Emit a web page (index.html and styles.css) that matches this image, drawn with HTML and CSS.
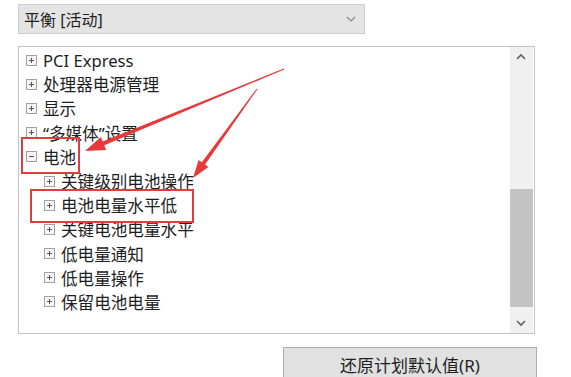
FILE: index.html
```html
<!DOCTYPE html>
<html lang="zh-CN">

<head>
  <meta charset="UTF-8">
  <title>电源选项</title>
  <link rel="stylesheet" href="styles.css">
</head>

<body>
  <div class="page">
    <div class="select">
      <span class="select-text">平衡 [活动]</span>
      <svg class="select-arrow" width="10" height="6" viewBox="0 0 10 6">
        <path d="M1 1 L5 5 L9 1" fill="none" stroke="#888" stroke-width="1.2" />
      </svg>
    </div>

    <div class="tree-box">
      <ul class="tree">
        <li class="row"><span class="toggle plus"></span>PCI Express</li>
        <li class="row"><span class="toggle plus"></span>处理器电源管理</li>
        <li class="row"><span class="toggle plus"></span>显示</li>
        <li class="row"><span class="toggle plus"></span>“多媒体”设置</li>
        <li class="row"><span class="mark mark-parent"><span class="toggle minus"></span>电池</span></li>
        <li class="row child"><span class="toggle plus"></span>关键级别电池操作</li>
        <li class="row child"><span class="mark mark-child"><span class="toggle plus"></span>电池电量水平低</span></li>
        <li class="row child"><span class="toggle plus"></span>关键电池电量水平</li>
        <li class="row child"><span class="toggle plus"></span>低电量通知</li>
        <li class="row child"><span class="toggle plus"></span>低电量操作</li>
        <li class="row child"><span class="toggle plus"></span>保留电池电量</li>
      </ul>
      <div class="scrollbar">
        <svg class="scroll-btn" width="22" height="20" viewBox="0 0 22 20">
          <path d="M7 12 L11 8 L15 12" fill="none" stroke="#606060" stroke-width="1.6" />
        </svg>
        <div class="track">
          <div class="thumb"></div>
        </div>
        <svg class="scroll-btn" width="22" height="20" viewBox="0 0 22 20">
          <path d="M7 8 L11 12 L15 8" fill="none" stroke="#606060" stroke-width="1.6" />
        </svg>
      </div>
    </div>

    <div class="actions">
      <button class="button">还原计划默认值(R)</button>
    </div>

    <svg class="arrows" width="571" height="377" viewBox="0 0 571 377">
      <polygon fill="#e8393a" points="283.8,68.5 102.7,141.6 100.8,136.9 85,151 106.2,149.9 104.3,145.2 284.2,69.5" />
      <polygon fill="#e8393a" points="256.6,88.7 201.9,162.2 198.6,159.9 193,178 208.4,166.9 205.1,164.6 257.4,89.3" />
    </svg>
  </div>
</body>

</html>
```

FILE: styles.css
```css
body {
  margin: 0;
  background: #ffffff;
  font-family: "Noto Sans", "Noto Sans CJK SC", sans-serif;
  color: #1e1e1e;
  overflow: hidden;
}

.page {
  position: relative;
  width: 571px;
  height: 377px;
  padding-top: 4px;
  box-sizing: border-box;
}

.select {
  display: flex;
  align-items: center;
  justify-content: space-between;
  margin-left: 18px;
  width: 347px;
  height: 30px;
  box-sizing: border-box;
  padding: 0 8px 0 5px;
  background: #e4e4e4;
  border: 1px solid #cdcdcd;
  font-size: 16px;
}

.tree-box {
  display: flex;
  margin-top: 12px;
  margin-left: 18px;
  width: 517px;
  height: 288px;
  box-sizing: border-box;
  border: 1px solid #c4c4c4;
  background: #fff;
}

.tree {
  flex: 1;
  list-style: none;
  margin: 0;
  padding: 1px 0 0 0;
}

.row {
  display: flex;
  align-items: center;
  height: 24.2px;
  padding-left: 7px;
  font-size: 16.6px;
  white-space: nowrap;
}

.row.child {
  padding-left: 25px;
}

.toggle {
  position: relative;
  display: inline-block;
  width: 9px;
  height: 9px;
  margin-right: 6px;
  border: 1px solid #a2a2a2;
  background: #f6f6f6;
  flex-shrink: 0;
}

.toggle::before {
  content: "";
  position: absolute;
  left: 2px;
  top: 4px;
  width: 5px;
  height: 1px;
  background: #555;
}

.plus::after {
  content: "";
  position: absolute;
  left: 4px;
  top: 2px;
  width: 1px;
  height: 5px;
  background: #555;
}

.mark {
  position: relative;
  display: flex;
  align-items: center;
}

.mark::after {
  content: "";
  position: absolute;
  border: 2px solid #e23c3c;
}

.mark-parent::after {
  left: -5px;
  right: -4px;
  top: -8px;
  bottom: -5px;
}

.mark-child::after {
  left: -14px;
  right: -17px;
  top: -4px;
  bottom: -6px;
}

.scrollbar {
  display: flex;
  flex-direction: column;
  width: 23px;
  background: #f0f0f0;
  margin-right: 1px;
}

.scroll-btn {
  display: block;
  flex-shrink: 0;
}

.track {
  flex: 1;
  padding-top: 122px;
  padding-bottom: 6px;
}

.thumb {
  height: 118px;
  background: #c3c3c3;
}

.actions {
  margin-top: 13px;
  margin-left: 283px;
}

.button {
  width: 254px;
  height: 34px;
  border: 1px solid #adadad;
  background: #e1e1e1;
  font-family: "Noto Sans", "Noto Sans CJK SC", sans-serif;
  font-size: 17px;
  color: #1e1e1e;
}

.arrows {
  position: absolute;
  left: 0;
  top: 0;
  pointer-events: none;
}
```
